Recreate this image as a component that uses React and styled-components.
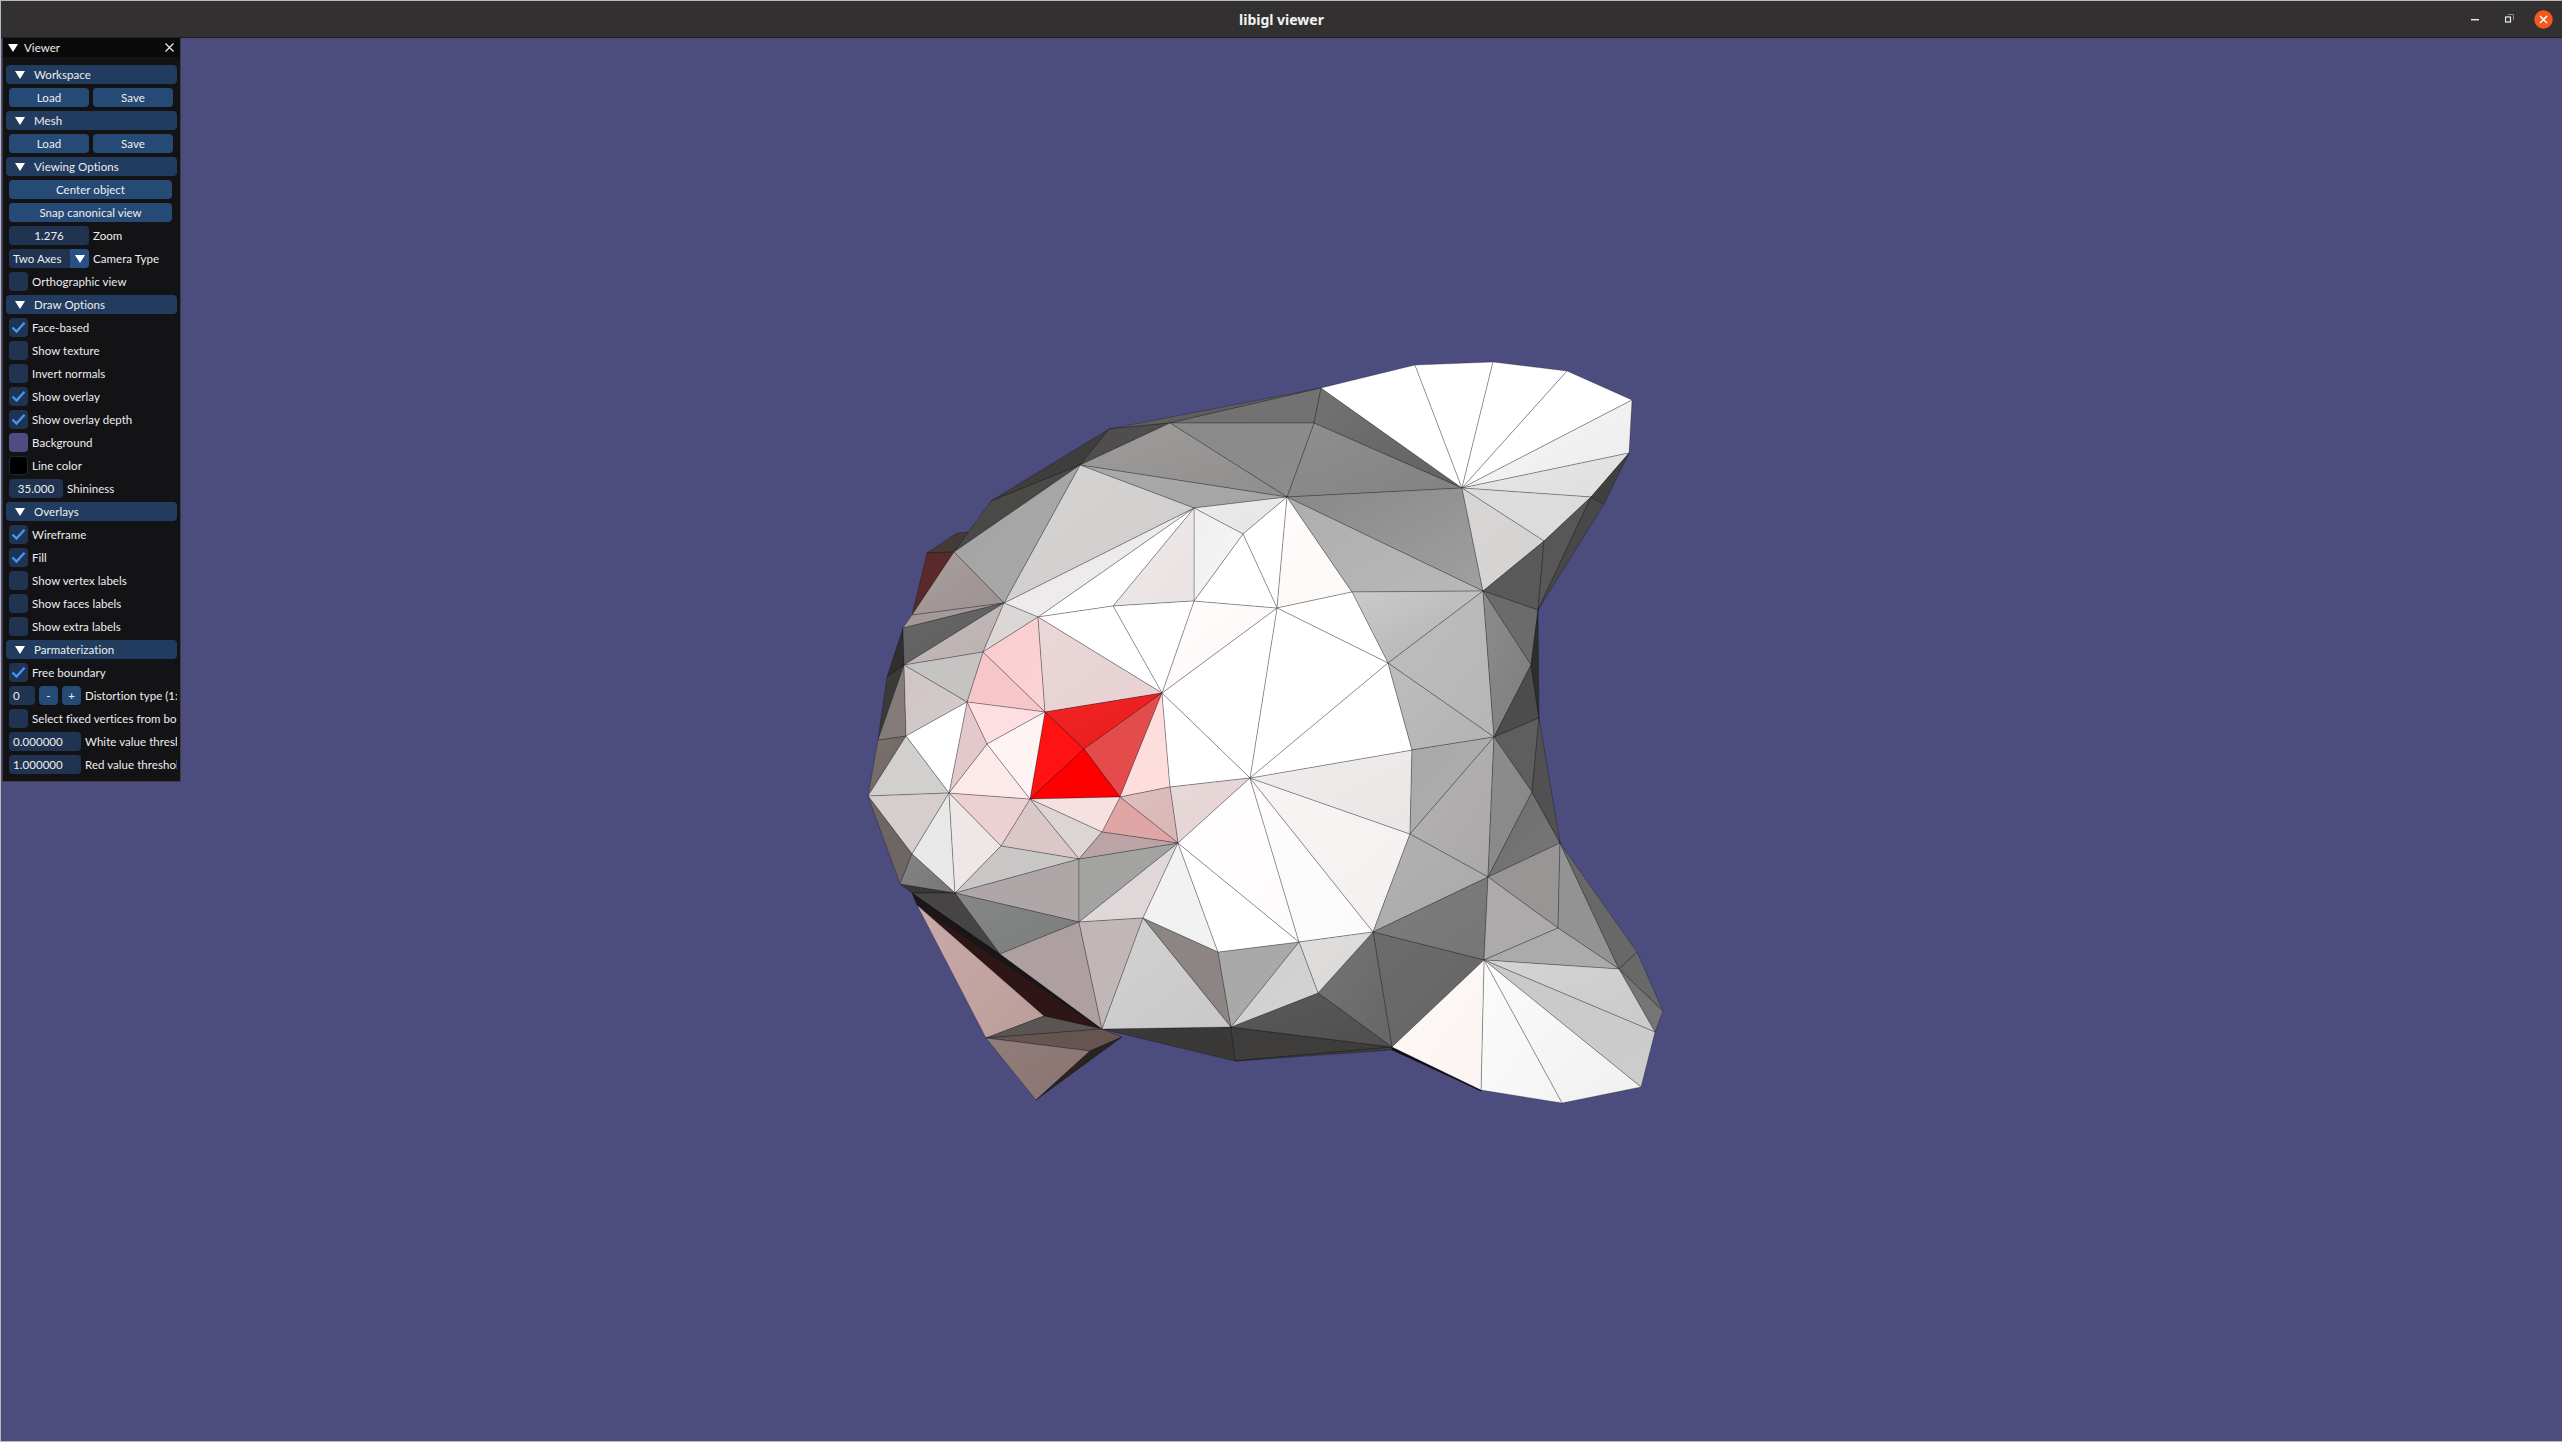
import React from 'react';
import styled, { createGlobalStyle } from 'styled-components';

const GlobalStyle = createGlobalStyle`
  html, body { margin: 0; padding: 0; background: #4c4c7f; }
  body { font-family: 'Lato', 'Roboto', sans-serif; overflow: hidden; }
`;

const Window = styled.div`
  width: 2562px;
  height: 1442px;
  display: flex;
  flex-direction: column;
  overflow: hidden;
  border-left: 1px solid #b9b9b9;
  border-top: 1px solid #b9b9b9;
  border-bottom: 1px solid #b9b9b9;
  box-sizing: border-box;
`;

const TitleBar = styled.header`
  height: 37px;
  flex: none;
  background: #323030;
  border-bottom: 1px solid #1f1e1e;
  box-sizing: border-box;
  display: flex;
  align-items: center;
  justify-content: center;
  position: relative;
`;

const TitleText = styled.span`
  font-family: 'Noto Sans', sans-serif;
  font-weight: 700;
  font-size: 14px;
  color: #f2f2f2;
`;

const WindowControls = styled.div`
  position: absolute;
  right: 9px;
  top: 9px;
  display: flex;
  align-items: center;
  height: 19px;
`;

const ControlIcon = styled.svg`
  display: block;
  width: ${(p) => p.$w}px;
  height: 19px;
  margin-right: ${(p) => p.$mr || 0}px;
`;

const Viewport = styled.main`
  flex: 1;
  position: relative;
  background: #4c4c7f;
`;

const MeshCanvas = styled.svg`
  position: absolute;
  left: -1px;
  top: -38px;
  width: 2562px;
  height: 1442px;
`;

const Panel = styled.aside`
  position: absolute;
  left: 1px;
  top: 0;
  width: 177px;
  height: 743px;
  box-sizing: content-box;
  background: #131316;
  border: 1px solid #3c3c45;
  border-top: none;
  font-family: 'Lato', 'Roboto', sans-serif;
  font-size: 11.5px;
  letter-spacing: 0.05px;
  color: #eeeeee;
`;

const PanelTitle = styled.div`
  height: 19px;
  background: #0a0a0a;
  display: flex;
  align-items: center;
  padding: 0 6px 0 5px;
  gap: 6px;
`;

const TitleLabel = styled.span`
  flex: 1;
`;

const Arrow = styled.i`
  display: block;
  flex: none;
  width: 0;
  height: 0;
  border-left: 5px solid transparent;
  border-right: 5px solid transparent;
  border-top: 8px solid #fff;
`;

const PanelBody = styled.div`
  width: 174px;
  padding: 8px 0 0 3px;
  overflow: hidden;
  display: flex;
  flex-direction: column;
  gap: 4px;
  box-sizing: border-box;
`;

const Header = styled.div`
  height: 19px;
  width: 171px;
  flex: none;
  background: #213c5e;
  border-radius: 4px;
  display: flex;
  align-items: center;
  gap: 9px;
  padding-left: 9px;
  box-sizing: border-box;
`;

const Row = styled.div`
  height: 19px;
  flex: none;
  display: flex;
  align-items: center;
  gap: 4px;
  padding-left: 3px;
  white-space: nowrap;
`;

const Button = styled.div`
  width: ${(p) => p.$w}px;
  height: 19px;
  flex: none;
  background: #264a76;
  border-radius: 4px;
  display: flex;
  align-items: center;
  justify-content: center;
`;

const Field = styled.div`
  width: ${(p) => p.$w}px;
  height: 19px;
  flex: none;
  background: #203350;
  border-radius: 4px;
  display: flex;
  align-items: center;
  justify-content: ${(p) => (p.$left ? 'flex-start' : 'center')};
  padding-left: ${(p) => (p.$left ? 4 : 0)}px;
  box-sizing: border-box;
`;

const Combo = styled(Field)`
  justify-content: space-between;
  overflow: hidden;
`;

const ComboArrow = styled.span`
  width: 19px;
  height: 19px;
  flex: none;
  background: #2a5083;
  display: flex;
  align-items: center;
  justify-content: center;
`;

const Box = styled.div`
  width: 19px;
  height: 19px;
  flex: none;
  border-radius: 4px;
  background: ${(p) => p.$color || '#203350'};
  display: flex;
  align-items: center;
  justify-content: center;
  box-sizing: border-box;
  ${(p) => (p.$outlined ? 'border: 1px solid #1c2a40;' : '')}
`;

const Check = () => (
  <svg width="15" height="13" viewBox="0 0 15 13">
    <path d="M1.5 6.5 L5.5 10.5 L13.5 1.8" fill="none" stroke="#4296fa" strokeWidth="2.4" />
  </svg>
);

const Checkbox = ({ label, on }) => (
  <Row>
    <Box>{on && <Check />}</Box>
    <span>{label}</span>
  </Row>
);

const Swatch = ({ label, color, outlined }) => (
  <Row>
    <Box $color={color} $outlined={outlined} />
    <span>{label}</span>
  </Row>
);

const Section = ({ label }) => (
  <Header>
    <Arrow />
    <span>{label}</span>
  </Header>
);

const LoadSave = () => (
  <Row>
    <Button $w={80}>Load</Button>
    <Button $w={80}>Save</Button>
  </Row>
);

// mesh vertices, in page pixels
const V = {
  a: [1321, 388], b: [1314, 423], c: [1170, 423], d: [1109, 429], e: [1080, 465], f: [1287, 497],
  g: [1462, 488], h: [1194, 508], i: [1243, 534], j: [1483, 591], k: [1352, 592], l: [1277, 608],
  m: [1194, 601], n: [1113, 606], p: [1038, 617], q: [1004, 603], r: [954, 552], t: [991, 501],
  u: [927, 553], u2: [957, 533], u3: [968, 532], v2: [912, 615], v: [903, 628], w: [904, 665],
  x: [983, 652], y: [967, 702], z: [1045, 712], aa: [1162, 693], o: [1388, 663], cc: [1084, 749],
  rl: [1030, 799], rr: [1120, 797], s: [1170, 787], hub: [1250, 778], ee: [1412, 750], ef: [1410, 834],
  eg: [1373, 932], eh: [1299, 942], ei: [1318, 993], ej: [1231, 1027], ek: [1218, 952], el: [1143, 918],
  em: [1178, 843], en: [1102, 832], eo: [1079, 859], ep: [1079, 922], eq: [1102, 1029], tip: [868, 796],
  fa: [949, 793], fb: [987, 744], fc: [906, 736], fd: [1001, 846], fe: [912, 854], ff: [955, 893],
  fg: [900, 884], fh: [912, 893], fi: [1000, 954], pa: [917, 905], pb: [1044, 1016], pc: [986, 1038],
  pd: [1090, 1051], pe: [1036, 1100], pf: [1122, 1037], ba: [1235, 1061], lo: [887, 677], lp: [878, 740],
  ta: [1415, 365], tb: [1493, 362], tc: [1567, 371], td: [1632, 400], te: [1629, 453], tf: [1591, 497],
  tg: [1604, 504], th: [1544, 541], ti: [1538, 610], tj: [1531, 665], tk: [1539, 718], tl: [1494, 737],
  tm: [1532, 792], tn: [1560, 843], to: [1488, 877], tp: [1558, 928], tq: [1637, 952], tr: [1619, 969],
  ts: [1663, 1011], tt: [1655, 1032], tu: [1641, 1087], tv: [1562, 1103], tw: [1481, 1090], tx: [1392, 1047],
  ty: [1484, 960], eb: [1392, 1050], ew: [1481, 1091], ev: [1562, 1104], eu: [1641, 1088],
};

// faces: vertex names, colour, optional second colour for a shaded face
const FACES = [
  ['u u2 u3 r', '#453a38'],
  ['u r v2', '#5a2a2a'],
  ['d t e', '#3f3e3d'],
  ['t e r', '#4b4946'],
  ['v w lo', '#2f2f2d'],
  ['lo w fc lp', '#3a3a38'],
  ['lp fc tip', '#7a716f', '#6e6663'],
  ['w fc lp', '#857c79'],
  ['pa fh eq', '#1a1716'],
  ['pa eq pb', '#2e1616'],
  ['pa pb pc', '#c9aaa8', '#bb9d9a'],
  ['pb eq pc', '#5a5553'],
  ['pc pd pf eq', '#665451'],
  ['pc pd pe', '#927d7a', '#897471'],
  ['pe pd pf', '#2a2322'],
  ['fh fi eq', '#181616'],
  ['fg ff fh', '#3a3837'],
  ['ff fi fh', '#474544'],
  ['eq ej ba', '#3a3938'],
  ['ej tx ba', '#3e3d3c'],
  ['tx eb ba', '#3e3d3c'],
  ['tx ew tw', '#0c0c0c'],
  ['tx eb ew', '#0c0c0c'],
  ['d a c', '#5f5e5e'],
  ['a b c', '#737272'],
  ['d c e', '#4f4e4d'],
  ['a g b', '#747373', '#626161'],
  ['b g f', '#8f8f8f', '#828282'],
  ['c b f', '#8a8a8a', '#8c8c8c'],
  ['e c f', '#9e9d9b', '#8f8e8c'],
  ['e f h', '#a9a9a9', '#a5a5a5'],
  ['h f i', '#ececec', '#e4e4e4'],
  ['i f l', '#ffffff'],
  ['f k l', '#fffbfa', '#fcf8f6'],
  ['f g j', '#888888', '#a0a0a0'],
  ['f j k', '#aeaeae', '#b8b8b8'],
  ['k j o', '#cbcbcb', '#b0b0b0'],
  ['k l o', '#ffffff'],
  ['l hub o', '#ffffff'],
  ['l aa hub', '#ffffff'],
  ['m l aa', '#fffcfb', '#fdf7f6'],
  ['m i l', '#ffffff'],
  ['h i m', '#efefef', '#f6f6f6'],
  ['n h m', '#eee9e9', '#e9e2e2'],
  ['n m aa', '#ffffff'],
  ['p h n', '#ffffff'],
  ['p n aa', '#ffffff'],
  ['q h p', '#e9e6e6', '#f1efef'],
  ['q e h', '#d6d3d3', '#cfcccc'],
  ['r e q', '#a3a3a3', '#a9a9a9'],
  ['r q v2', '#a89e9d', '#9c9290'],
  ['v2 q v', '#a39998'],
  ['v q w', '#666666', '#5f5f5f'],
  ['w q x', '#c4baba', '#bcb1b1'],
  ['q p x', '#dbd7d7'],
  ['x p z', '#facccf', '#fad4d5'],
  ['x z y', '#f6c6c8'],
  ['w x y', '#c6c3c3'],
  ['w y fc', '#cfc5c5', '#d4cbcb'],
  ['p aa z', '#ebd7d8', '#e7d1d2'],
  ['z aa cc', '#f22525', '#e81c1c'],
  ['aa rr cc', '#e44c4c'],
  ['z cc rl', '#ff1212'],
  ['cc rr rl', '#ff0000'],
  ['aa s rr', '#fedddd'],
  ['aa hub s', '#ffffff'],
  ['s hub em', '#e8dada', '#e3d1d1'],
  ['rr s em', '#debfbf', '#d9b5b5'],
  ['en em rr', '#e0a6a6'],
  ['rl rr en', '#f7e0e0'],
  ['rl en eo', '#ddd4d4'],
  ['rl eo fd', '#dac7c7'],
  ['fa rl fd', '#edd0d2'],
  ['fa fb rl', '#fce9e9'],
  ['y z fb', '#fddfe1'],
  ['z rl fb', '#fff4f4'],
  ['y fb fa', '#e3c9cc'],
  ['y fa fc', '#ffffff'],
  ['fc fa tip', '#d2cfcf'],
  ['tip fa fe', '#d6cdcd'],
  ['fa ff fe', '#e8e8e8'],
  ['fa fd ff', '#efe6e6'],
  ['tip fe fg', '#6f6663'],
  ['fg fe ff', '#868686', '#757575'],
  ['ff fd eo', '#c9c7c6'],
  ['ff eo ep', '#afa7a7'],
  ['eo em ep', '#a3a3a1'],
  ['en em eo', '#bca4a6'],
  ['ep em el', '#e0d8d8'],
  ['ff ep fi', '#858786', '#7c7e7d'],
  ['fi ep eq', '#aea0a0'],
  ['ep el eq', '#c2b7b7'],
  ['el ej eq', '#d2d2d2', '#c8c8c8'],
  ['el ek ej', '#8c8584'],
  ['ek eh ej', '#a9a9a9'],
  ['em ek el', '#f2f2f3'],
  ['em eh ek', '#ffffff'],
  ['em hub eh', '#fffefe', '#fefbfb'],
  ['hub eg eh', '#fefcfc', '#fbfbfb'],
  ['hub ef eg', '#f7f4f3', '#f3f0ef'],
  ['hub ee ef', '#f0ecec', '#ebe6e6'],
  ['hub o ee', '#ffffff'],
  ['o j tl', '#bebebe', '#b6b6b6'],
  ['o tl ee', '#bdbdbd', '#b3b3b3'],
  ['ee tl ef', '#a8a8a8', '#b0b0b0'],
  ['ef tl to', '#b4b2b2', '#aaa8a8'],
  ['ef to eg', '#b2b2b2', '#a9a9a9'],
  ['eg to ty', '#7d7d7d', '#767676'],
  ['eg ty tx', '#6d6c6c', '#666565'],
  ['eg ei tx', '#757575', '#666666'],
  ['ej ei tx', '#5a5a5a', '#4f4f4f'],
  ['eh eg ei', '#e0dedd', '#dbd9d8'],
  ['ej eh ei', '#cecece', '#d4d4d4'],
  ['g a ta', '#ffffff'],
  ['g ta tb', '#ffffff'],
  ['g tb tc', '#ffffff'],
  ['g tc td', '#ffffff'],
  ['g td te', '#f7f7f7', '#ececec'],
  ['g te tf', '#e8e8e8', '#dedede'],
  ['g tf th', '#dcdcdc'],
  ['g th j', '#d8d5d5', '#d5d2d2'],
  ['j th ti', '#595959'],
  ['th tf ti', '#585656'],
  ['tf tg ti', '#484848'],
  ['te tg tf', '#404040'],
  ['j ti tj', '#6b6b6b'],
  ['j tj tl', '#8c8c8c', '#7d7d7d'],
  ['tl tj tk', '#4c4c4c'],
  ['ti tj tk', '#2e2e2e'],
  ['tl tk tm', '#5e5e5e'],
  ['tl tm to', '#8c8c8c', '#888888'],
  ['to tm tn', '#6d6d6d', '#787878'],
  ['tm tk tn', '#515151'],
  ['to tn tp', '#989594'],
  ['to tp ty', '#acaaaa'],
  ['tn tr tp', '#939393'],
  ['tn tq tr', '#686868'],
  ['ty tp tr', '#ababab'],
  ['tq ts tr', '#686868'],
  ['tr ts tt', '#757575'],
  ['ty tr tt', '#d4d4d4', '#cacaca'],
  ['ty tt tu', '#c8c8c8', '#cdcdcd'],
  ['ty tu tv', '#fbfbfb', '#f0f0f0'],
  ['ty tv tw', '#fbfbfb', '#f5f5f5'],
  ['tx tw ty', '#fdf8f7', '#fbf4f3'],
];

const Mesh = () => (
  <MeshCanvas viewBox="0 0 2562 1442">
    <defs>
      {FACES.map(([, c1, c2], n) => c2 && (
        <linearGradient key={n} id={`face${n}`} x1="0" y1="0" x2="1" y2="1">
          <stop offset="0" stopColor={c1} />
          <stop offset="1" stopColor={c2} />
        </linearGradient>
      ))}
    </defs>
    {FACES.map(([names, c1, c2], n) => (
      <polygon
        key={n}
        points={names.split(' ').map((name) => V[name].join(',')).join(' ')}
        fill={c2 ? `url(#face${n})` : c1}
        stroke="rgba(0,0,0,0.36)"
        strokeWidth="0.7"
        strokeLinejoin="round"
      />
    ))}
  </MeshCanvas>
);

export default function App() {
  return (
    <>
      <GlobalStyle />
      <Window>
        <TitleBar>
          <TitleText>libigl viewer</TitleText>
          <WindowControls>
            <ControlIcon $w={9} $mr={25} viewBox="0 0 9 19">
              <rect x="0" y="9" width="8" height="1.4" fill="#eee" />
            </ControlIcon>
            <ControlIcon $w={9} $mr={20} viewBox="0 0 9 19">
              <path d="M3 4.5 H8.5 V10" fill="none" stroke="#8a8a8a" strokeWidth="1" />
              <rect x="0.5" y="7" width="5" height="5" fill="none" stroke="#eee" strokeWidth="1.2" />
            </ControlIcon>
            <ControlIcon $w={19} viewBox="0 0 19 19">
              <circle cx="9.5" cy="9.5" r="9.2" fill="#f1591f" />
              <path d="M6 6 L13 13 M13 6 L6 13" stroke="#fff" strokeWidth="1.5" />
            </ControlIcon>
          </WindowControls>
        </TitleBar>
        <Viewport>
          <Mesh />
          <Panel>
            <PanelTitle>
              <Arrow />
              <TitleLabel>Viewer</TitleLabel>
              <svg width="9" height="9" viewBox="0 0 9 9">
                <path d="M0.5 0.5 L8.5 8.5 M8.5 0.5 L0.5 8.5" stroke="#f0f0f0" strokeWidth="1.1" />
              </svg>
            </PanelTitle>
            <PanelBody>
              <Section label="Workspace" />
              <LoadSave />
              <Section label="Mesh" />
              <LoadSave />
              <Section label="Viewing Options" />
              <Row><Button $w={163}>Center object</Button></Row>
              <Row><Button $w={163}>Snap canonical view</Button></Row>
              <Row><Field $w={80}>1.276</Field><span>Zoom</span></Row>
              <Row>
                <Combo $w={80} $left>
                  Two Axes
                  <ComboArrow><Arrow /></ComboArrow>
                </Combo>
                <span>Camera Type</span>
              </Row>
              <Checkbox label="Orthographic view" />
              <Section label="Draw Options" />
              <Checkbox label="Face-based" on />
              <Checkbox label="Show texture" />
              <Checkbox label="Invert normals" />
              <Checkbox label="Show overlay" on />
              <Checkbox label="Show overlay depth" on />
              <Swatch label="Background" color="#4e4c80" />
              <Swatch label="Line color" color="#000" outlined />
              <Row><Field $w={54}>35.000</Field><span>Shininess</span></Row>
              <Section label="Overlays" />
              <Checkbox label="Wireframe" on />
              <Checkbox label="Fill" on />
              <Checkbox label="Show vertex labels" />
              <Checkbox label="Show faces labels" />
              <Checkbox label="Show extra labels" />
              <Section label="Parmaterization" />
              <Checkbox label="Free boundary" on />
              <Row>
                <Field $w={26} $left>0</Field>
                <Button $w={19}>-</Button>
                <Button $w={19}>+</Button>
                <span>Distortion type (1:</span>
              </Row>
              <Checkbox label="Select fixed vertices from boundary" />
              <Row><Field $w={72} $left>0.000000</Field><span>White value threshold</span></Row>
              <Row><Field $w={72} $left>1.000000</Field><span>Red value threshold</span></Row>
            </PanelBody>
          </Panel>
        </Viewport>
      </Window>
    </>
  );
}
